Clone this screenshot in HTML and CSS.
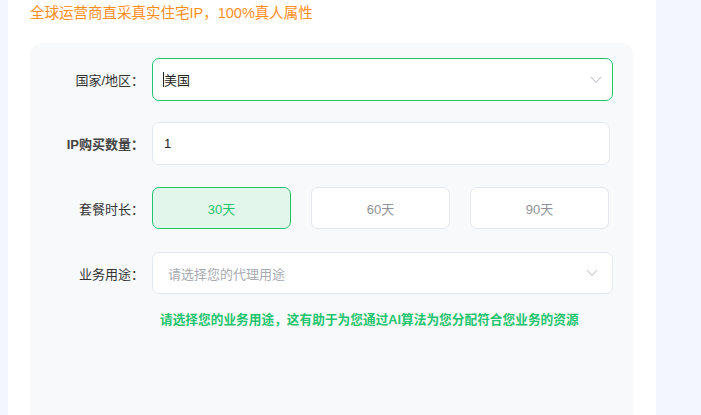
FILE: index.html
```html
<!DOCTYPE html>
<html lang="zh-CN">

<head>
    <meta charset="UTF-8">
    <meta name="viewport" content="width=device-width, initial-scale=1.0">
    <title>购买住宅IP</title>
    <link rel="stylesheet" href="styles.css">
</head>

<body>
    <div class="panel">
        <p class="slogan">全球运营商直采真实住宅IP，100%真人属性</p>
        <div class="form-card">
            <div class="form-row row-country">
                <label class="form-label">国家/地区：</label>
                <div class="select active">
                    <span class="select-value"><i class="caret"></i>美国</span>
                    <svg class="arrow" width="12" height="8" viewBox="0 0 12 8"><path d="M1 1l5 5.5L11 1" fill="none" stroke="#c0c4cc" stroke-width="1.1"/></svg>
                </div>
            </div>
            <div class="form-row row-count">
                <label class="form-label strong">IP购买数量：</label>
                <div class="input">1</div>
            </div>
            <div class="form-row row-period">
                <label class="form-label">套餐时长：</label>
                <div class="period-options">
                    <button class="period selected">30天</button>
                    <button class="period">60天</button>
                    <button class="period">90天</button>
                </div>
            </div>
            <div class="form-row row-usage">
                <label class="form-label">业务用途：</label>
                <div class="select">
                    <span class="placeholder">请选择您的代理用途</span>
                    <svg class="arrow" width="12" height="8" viewBox="0 0 12 8"><path d="M1 1l5 5.5L11 1" fill="none" stroke="#c0c4cc" stroke-width="1.1"/></svg>
                </div>
            </div>
            <p class="hint">请选择您的业务用途，这有助于为您通过AI算法为您分配符合您业务的资源</p>
        </div>
    </div>
</body>

</html>
```

FILE: styles.css
```css
body {
    margin: 0;
    background-color: #f3f6fd;
    font-family: "Liberation Sans", "Noto Sans CJK SC", sans-serif;
    color: #333;
}

.panel {
    margin-left: 8px;
    width: 648px;
    height: 415px;
    background-color: #fff;
    padding: 0 23px 0 22px;
    box-sizing: border-box;
    overflow: hidden;
}

.slogan {
    margin: 0;
    padding-top: 3px;
    font-size: 14.5px;
    line-height: 20px;
    color: #ff8d1a;
}

.form-card {
    margin-top: 20px;
    height: 400px;
    background-color: #f8f9fb;
    border-radius: 12px;
    padding: 15px 20px 0 0;
}

.form-row {
    display: flex;
    align-items: center;
}

.row-count {
    margin-top: 21px;
}

.row-period {
    margin-top: 22px;
}

.row-usage {
    margin-top: 23px;
}

.form-label {
    width: 114px;
    margin-right: 8px;
    flex-shrink: 0;
    text-align: right;
    font-size: 13px;
    color: #333;
}

.form-label.strong {
    font-weight: bold;
    color: #444;
}

.select,
.input {
    flex: 1;
    display: flex;
    align-items: center;
    justify-content: space-between;
    height: 43px;
    box-sizing: border-box;
    background-color: #fff;
    border: 1px solid #e3e7ee;
    border-radius: 7px;
    font-size: 13px;
    color: #222;
}

.select {
    padding: 0 10px 0 15px;
}

.row-usage .select {
    height: 42px;
}

.select.active {
    border-color: #1ec46e;
    padding-left: 10px;
}

.input {
    margin-right: 3px;
    padding-left: 11px;
}

.select-value {
    display: flex;
    align-items: center;
}

.caret {
    width: 1px;
    height: 15px;
    background-color: #222;
}

.placeholder {
    color: #a8abb2;
}

.row-usage .arrow {
    margin-right: 4px;
}

.period-options {
    display: flex;
    gap: 20px;
}

.period {
    width: 139px;
    height: 42px;
    background-color: #fff;
    border: 1px solid #e3e7ee;
    border-radius: 7px;
    font-family: inherit;
    font-size: 13px;
    color: #909399;
    cursor: pointer;
}

.period.selected {
    background-color: #e2f6ec;
    border-color: #1ec46e;
    color: #1ec46e;
}

.hint {
    margin: 17px 0 0 130px;
    font-size: 12.7px;
    line-height: 18px;
    font-weight: bold;
    color: #1ec46e;
}
```
